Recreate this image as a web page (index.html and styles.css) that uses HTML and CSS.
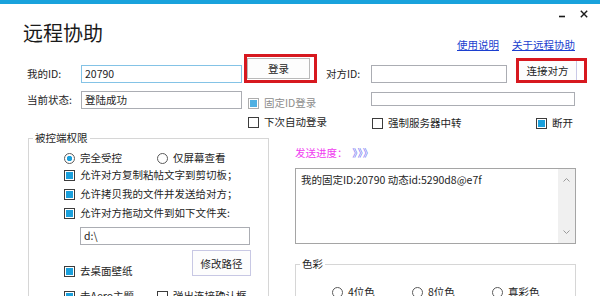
FILE: index.html
```html
<!DOCTYPE html>
<html lang="zh-CN">
<head>
    <meta charset="UTF-8">
    <title>远程协助</title>
    <link rel="stylesheet" href="styles.css">
</head>
<body>
<div class="window">
    <header class="head">
        <h1 class="title">远程协助</h1>
        <div class="head-right">
            <div class="winctl">
                <svg class="ctl" width="8" height="8" viewBox="0 0 8 8"><path d="M1 6.5h6" stroke="#1a1a1a" stroke-width="1.6"/></svg>
                <svg class="ctl" width="8" height="8" viewBox="0 0 8 8"><path d="M0.8 0.8l6.4 6.4M7.2 0.8l-6.4 6.4" stroke="#1a1a1a" stroke-width="1.4"/></svg>
            </div>
            <nav class="links">
                <a href="#">使用说明</a>
                <a href="#">关于远程协助</a>
            </nav>
        </div>
    </header>

    <section class="top">
        <div class="idcol">
            <div class="field">
                <span class="lbl">我的ID:</span>
                <div class="box focus">20790</div>
            </div>
            <div class="field">
                <span class="lbl">当前状态:</span>
                <div class="box">登陆成功</div>
            </div>
        </div>

        <div class="midcol">
            <div class="hl hl-login">
                <button class="btn btn-login">登录</button>
            </div>
            <label class="check check-fixed disabled"><span class="cb on"></span>固定ID登录</label>
            <label class="check check-auto"><span class="cb"></span>下次自动登录</label>
        </div>

        <div class="peer">
            <div class="peer-row">
                <span class="lbl lbl-peer">对方ID:</span>
                <div class="box box-peer"></div>
                <div class="hl hl-connect">
                    <button class="btn btn-connect">连接对方</button>
                </div>
            </div>
            <div class="box box-wide"></div>
            <div class="peer-checks">
                <label class="check"><span class="cb"></span>强制服务器中转</label>
                <label class="check"><span class="cb on"></span>断开</label>
            </div>
        </div>
    </section>

    <section class="bottom">
        <fieldset class="group group-perm">
            <legend>被控端权限</legend>
            <div class="perm-body">
                <div class="opt-row opt-radios">
                    <label class="check item"><span class="rb on"></span>完全受控</label>
                    <label class="check"><span class="rb"></span>仅屏幕查看</label>
                </div>
                <div class="opt-list">
                    <label class="check"><span class="cb on"></span>允许对方复制粘帖文字到剪切板；</label>
                    <label class="check"><span class="cb on"></span>允许拷贝我的文件并发送给对方；</label>
                    <label class="check"><span class="cb on"></span>允许对方拖动文件到如下文件夹:</label>
                </div>
                <div class="box box-path">d:\</div>
                <div class="opt-row opt-wall">
                    <label class="check check-wall"><span class="cb on"></span>去桌面壁纸</label>
                    <button class="btn btn-path">修改路径</button>
                </div>
                <div class="opt-row opt-aero">
                    <label class="check item"><span class="cb on"></span>去Aero主题</label>
                    <label class="check"><span class="cb"></span>弹出连接确认框</label>
                </div>
            </div>
        </fieldset>

        <div class="side">
            <div class="progress">发送进度：<span class="arrows">》》》</span></div>
            <div class="log">
                <div class="log-text">我的固定ID:20790 动态id:5290d8@e7f</div>
                <div class="scroll">
                    <svg width="7" height="4" viewBox="0 0 7 4"><path d="M0.5 3.5l3-3 3 3" fill="none" stroke="#9a9a9a"/></svg>
                    <svg width="7" height="4" viewBox="0 0 7 4"><path d="M0.5 0.5l3 3 3-3" fill="none" stroke="#9a9a9a"/></svg>
                </div>
            </div>
            <fieldset class="group group-color">
                <legend>色彩</legend>
                <div class="opt-row colors">
                    <label class="check color"><span class="rb"></span>4位色</label>
                    <label class="check color"><span class="rb"></span>8位色</label>
                    <label class="check color"><span class="rb"></span>真彩色</label>
                </div>
            </fieldset>
        </div>
    </section>
</div>
</body>
</html>
```

FILE: styles.css
```css
* {
    box-sizing: border-box;
}

body {
    margin: 0;
    background-color: #fff;
    font-family: "Noto Sans CJK SC", "Liberation Sans", sans-serif;
    font-size: 10.5px;
    color: #1e1e1e;
}

.window {
    width: 600px;
    height: 296px;
    overflow: hidden;
    border-top: 4px solid #19a2dc;
}

/* header */
.head {
    display: flex;
    justify-content: space-between;
    height: 50px;
}

.title {
    margin: 0;
    padding: 19px 0 0 23px;
    font-size: 20px;
    line-height: 20px;
    font-weight: normal;
    color: #1a1a1a;
}

.head-right {
    display: flex;
    flex-direction: column;
    align-items: flex-end;
    padding-right: 12px;
}

.winctl {
    display: flex;
    gap: 14px;
    padding-top: 6px;
}

.ctl {
    display: block;
}

.links {
    display: flex;
    gap: 13px;
    margin-top: 21px;
    margin-right: 13px;
    line-height: 12px;
}

.links a {
    color: #1c3fcf;
    text-decoration: underline;
}

/* top part */
.top {
    display: flex;
    height: 76px;
    padding-left: 27px;
}

.idcol {
    display: flex;
    flex-direction: column;
    gap: 8px;
    width: 215px;
    padding-top: 11px;
}

.field {
    display: flex;
    align-items: center;
    height: 18px;
}

.lbl {
    width: 54px;
    line-height: 18px;
}

.box {
    width: 161px;
    height: 18px;
    border: 1px solid #abadb3;
    padding-left: 3px;
    line-height: 16px;
    background-color: #fff;
}

.box.focus {
    border-color: #84c3e6;
}

.midcol {
    width: 82px;
    margin-left: 2px;
    white-space: nowrap;
}

.hl {
    display: flex;
    border: 3px solid #d7181f;
}

.hl-login {
    width: 73px;
    height: 29px;
    padding-top: 1px;
}

.btn {
    font-family: inherit;
    font-size: 10.5px;
    color: #1e1e1e;
    background-color: #fdfdfd;
    border: 1px solid #b9b9b9;
    padding: 0;
}

.btn-login {
    width: 63px;
    height: 21px;
}

.check {
    display: flex;
    align-items: center;
    gap: 5px;
    height: 14px;
    line-height: 14px;
    white-space: nowrap;
}

.check-fixed {
    margin: 13px 0 0 4px;
}

.check-auto {
    margin: 5px 0 0 4px;
}

.disabled {
    color: #8d8d8d;
}

.cb {
    flex: none;
    width: 11px;
    height: 11px;
    border: 1px solid #3c3c3c;
    background-color: #fff;
}

.cb.on {
    background-color: #1aa0dc;
    box-shadow: inset 0 0 0 1px #fff;
}

.disabled .cb {
    border-color: #adadad;
}

.disabled .cb.on {
    background-color: #4fb0e2;
}

.rb {
    flex: none;
    width: 11px;
    height: 11px;
    border: 1px solid #5a5a5a;
    border-radius: 50%;
    background-color: #fff;
}

.rb.on {
    background: radial-gradient(circle, #1aa0dc 0 2.5px, #fff 3px);
}

.peer {
    display: flex;
    flex-direction: column;
    width: 264px;
}

.peer-row {
    display: flex;
    align-items: flex-start;
}

.lbl-peer {
    width: 45px;
    margin-top: 11px;
}

.box-peer {
    width: 136px;
    margin-top: 11px;
}

.hl-connect {
    width: 71px;
    height: 25px;
    margin: 4px 0 0 9px;
}

.btn-connect {
    width: 58px;
    height: 19px;
    border-color: #c9c9e6;
    border-left: none;
    border-top: none;
    border-bottom: none;
}

.box-wide {
    width: 204px;
    height: 17px;
    margin: 9px 0 0 45px;
}

.peer-checks {
    display: flex;
    justify-content: space-between;
    margin: 10px 0 0 46px;
    padding-right: 17px;
}

/* bottom part */
.bottom {
    display: flex;
    padding-left: 28px;
}

.group {
    margin: 0;
    padding: 0;
    min-width: 0;
    border: 1px solid #d6d6d6;
}

.group legend {
    margin-left: 4px;
    padding: 0 2px;
    line-height: 16px;
}

.group-perm {
    width: 241px;
    height: 200px;
}

.perm-body {
    padding-left: 35px;
}

.opt-row {
    display: flex;
}

.item {
    width: 93px;
}

.opt-radios {
    margin-top: 5px;
}

.opt-list {
    display: flex;
    flex-direction: column;
    gap: 5px;
    margin-top: 3px;
}

.box-path {
    width: 170px;
    margin: 7px 0 0 16px;
}

.opt-wall {
    justify-content: space-between;
    align-items: flex-start;
    width: 187px;
    margin-top: 5px;
}

.check-wall {
    margin-top: 14px;
}

.btn-path {
    width: 59px;
    height: 26px;
    border-color: #c8c8e4;
}

.opt-aero {
    margin-top: 11px;
}

.side {
    width: 281px;
    margin-left: 26px;
    padding-top: 16px;
}

.progress {
    line-height: 14px;
    color: #f03cf0;
}

.arrows {
    margin-left: 10px;
    color: #6c6cf2;
}

.log {
    display: flex;
    height: 76px;
    margin-top: 8px;
    border: 1px solid #a5a5a5;
}

.log-text {
    flex: 1;
    padding: 4px 0 0 5px;
    line-height: 14px;
}

.scroll {
    display: flex;
    flex-direction: column;
    justify-content: space-between;
    align-items: center;
    width: 17px;
    padding: 9px 0 9px;
    background-color: #f0f0f0;
}

.scroll svg {
    display: block;
}

.group-color {
    height: 60px;
    margin-top: 12px;
}

.colors {
    padding: 13px 0 0 36px;
}

.color {
    width: 80px;
}
```
